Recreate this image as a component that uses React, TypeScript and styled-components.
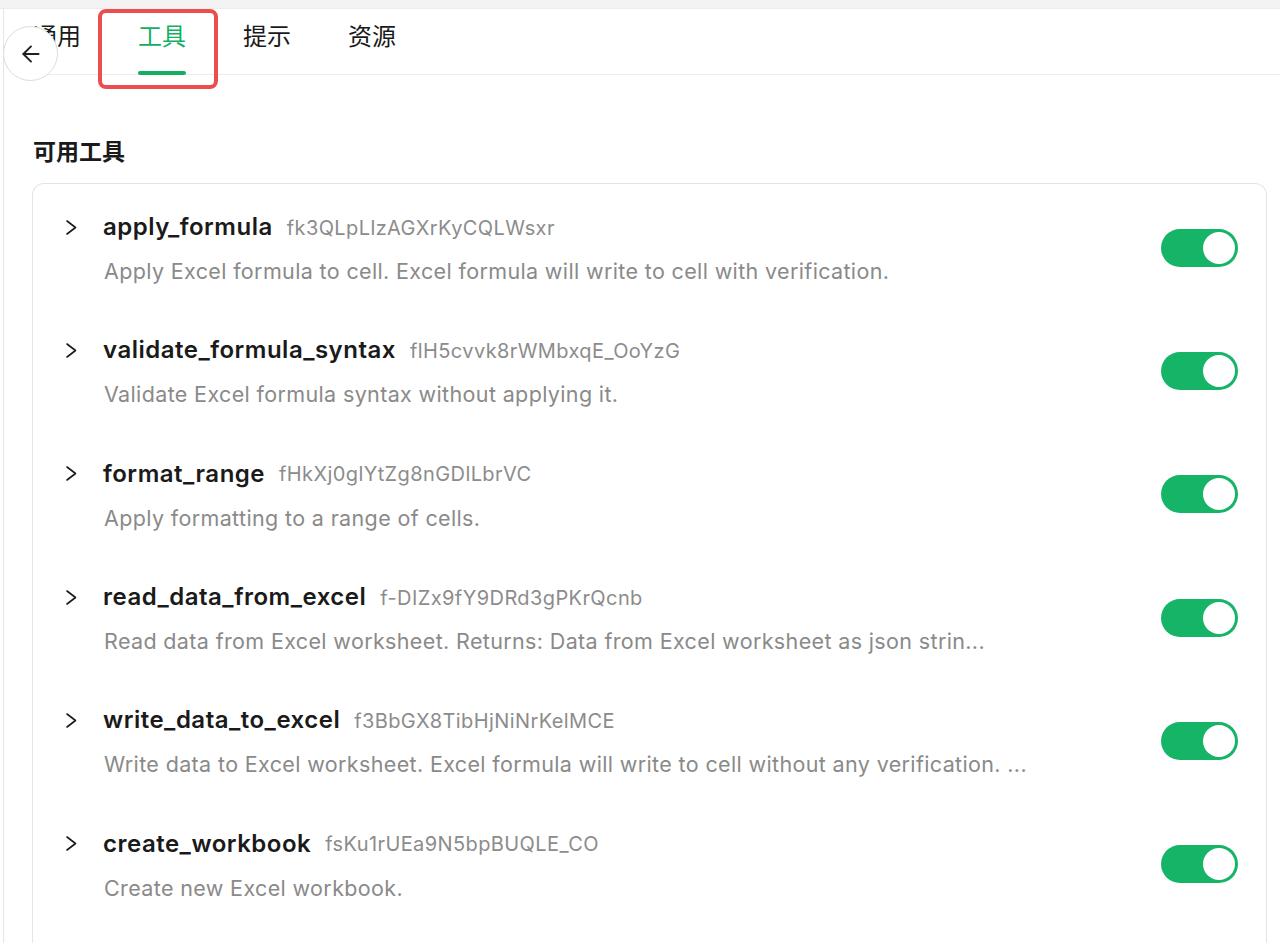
import styled, { createGlobalStyle } from "styled-components";

const GlobalStyle = createGlobalStyle`
  html, body {
    margin: 0;
    padding: 0;
    background: #fff;
    font-family: Inter, "Noto Sans", "Noto Sans CJK SC", sans-serif;
    color: #1a1a1a;
  }
  * { box-sizing: border-box; }
`;

interface Tool {
  name: string;
  id: string;
  desc: string;
}

const tools: Tool[] = [
  {
    name: "apply_formula",
    id: "fk3QLpLlzAGXrKyCQLWsxr",
    desc: "Apply Excel formula to cell. Excel formula will write to cell with verification.",
  },
  {
    name: "validate_formula_syntax",
    id: "flH5cvvk8rWMbxqE_OoYzG",
    desc: "Validate Excel formula syntax without applying it.",
  },
  {
    name: "format_range",
    id: "fHkXj0glYtZg8nGDlLbrVC",
    desc: "Apply formatting to a range of cells.",
  },
  {
    name: "read_data_from_excel",
    id: "f-DIZx9fY9DRd3gPKrQcnb",
    desc: "Read data from Excel worksheet. Returns: Data from Excel worksheet as json strin...",
  },
  {
    name: "write_data_to_excel",
    id: "f3BbGX8TibHjNiNrKelMCE",
    desc: "Write data to Excel worksheet. Excel formula will write to cell without any verification. ...",
  },
  {
    name: "create_workbook",
    id: "fsKu1rUEa9N5bpBUQLE_CO",
    desc: "Create new Excel workbook.",
  },
];

const tabs = ["通用", "工具", "提示", "资源"];

const App = () => {
  return (
    <>
      <GlobalStyle />
      <TopBand />
      <Panel>
        <BackButton>
          <svg width="26" height="26" viewBox="0 0 24 24" fill="none" stroke="#222" strokeWidth="1.8" strokeLinecap="round" strokeLinejoin="round">
            <path d="M19 12H5" />
            <path d="M12 19l-7-7 7-7" />
          </svg>
        </BackButton>
        <Highlight />
        <TabBar>
          {tabs.map((t, i) => (
            <Tab key={t} $active={i === 1}>
              {t}
            </Tab>
          ))}
        </TabBar>
        <Content>
          <SectionTitle>可用工具</SectionTitle>
          <Card>
            {tools.map(({ name, id, desc }) => (
              <Row key={id}>
                <RowBody>
                  <TitleLine>
                    <Chevron>
                      <svg width="12" height="17" viewBox="0 0 12 17" fill="none" stroke="#1a1a1a" strokeWidth="1.6" strokeLinecap="round" strokeLinejoin="round">
                        <path d="M2 2l8.5 6.5L2 15" />
                      </svg>
                    </Chevron>
                    <ToolName>{name}</ToolName>
                    <ToolId>{id}</ToolId>
                  </TitleLine>
                  <Desc>{desc}</Desc>
                </RowBody>
                <Toggle>
                  <Knob />
                </Toggle>
              </Row>
            ))}
          </Card>
        </Content>
      </Panel>
    </>
  );
};

const TopBand = styled.div`
  height: 9px;
  background: #f3f3f3;
  border-bottom: 1px solid #ececec;
`;

const Panel = styled.div`
  position: relative;
  margin-left: 3px;
  border-left: 1px solid #e6e6e6;
  min-height: 933px;
  padding-left: 28px;
`;

const BackButton = styled.div`
  position: absolute;
  left: -1px;
  top: 17px;
  width: 55px;
  height: 55px;
  border-radius: 50%;
  border: 1px solid #dcdcdc;
  background: #fff;
  display: flex;
  align-items: center;
  justify-content: center;
  z-index: 2;
`;

const Highlight = styled.div`
  position: absolute;
  left: 94px;
  top: 0;
  width: 120px;
  height: 80px;
  border: 4px solid #ec4d4f;
  border-radius: 8px;
  z-index: 3;
`;

const TabBar = styled.div`
  display: flex;
  gap: 57px;
  height: 66px;
  padding-left: 1px;
  border-bottom: 1px solid #ececec;
`;

const Tab = styled.div<{ $active?: boolean }>`
  position: relative;
  font-size: 24px;
  line-height: 24px;
  padding-top: 14px;
  color: ${({ $active }) => ($active ? "#14ae63" : "#1a1a1a")};
  font-family: "Noto Sans CJK SC", sans-serif;
  &::after {
    content: "";
    display: ${({ $active }) => ($active ? "block" : "none")};
    position: absolute;
    left: 0;
    right: 0;
    bottom: -1px;
    height: 4px;
    border-radius: 2px;
    background: #14ae63;
  }
`;

const Content = styled.div`
  padding-right: 13px;
`;

const SectionTitle = styled.h3`
  margin: 0;
  padding: 59px 0 17px 1px;
  font-size: 23px;
  font-weight: 600;
  line-height: 32px;
  font-family: "Noto Sans CJK SC", sans-serif;
`;

const Card = styled.div`
  border: 1px solid #e4e4e4;
  border-bottom: none;
  border-radius: 12px 12px 0 0;
  padding-top: 3px;
  padding-bottom: 20px;
`;

const Row = styled.div`
  display: flex;
  align-items: center;
  height: 123.3px;
  padding: 0 28px 0 32px;
`;

const RowBody = styled.div`
  flex: 1;
  display: flex;
  flex-direction: column;
  gap: 15px;
`;

const TitleLine = styled.div`
  display: flex;
  align-items: center;
  height: 30px;
`;

const Chevron = styled.div`
  width: 12px;
  margin-right: 26px;
  display: flex;
`;

const ToolName = styled.span`
  font-size: 24px;
  font-weight: 600;
  letter-spacing: 0.5px;
  color: #1a1a1a;
  line-height: 30px;
  margin-right: 14px;
`;

const ToolId = styled.span`
  font-size: 20px;
  letter-spacing: 0.4px;
  color: #8c8c8c;
  line-height: 30px;
  padding-top: 1px;
`;

const Desc = styled.div`
  font-size: 21.5px;
  letter-spacing: 0.36px;
  color: #8a8a8a;
  line-height: 28px;
  margin-left: 39px;
`;

const Toggle = styled.div`
  width: 77px;
  height: 38px;
  border-radius: 19px;
  background: #15b467;
  padding: 3px;
  display: flex;
  justify-content: flex-end;
  margin-top: -2px;
`;

const Knob = styled.div`
  width: 32px;
  height: 32px;
  border-radius: 50%;
  background: #fff;
`;

export default App;
